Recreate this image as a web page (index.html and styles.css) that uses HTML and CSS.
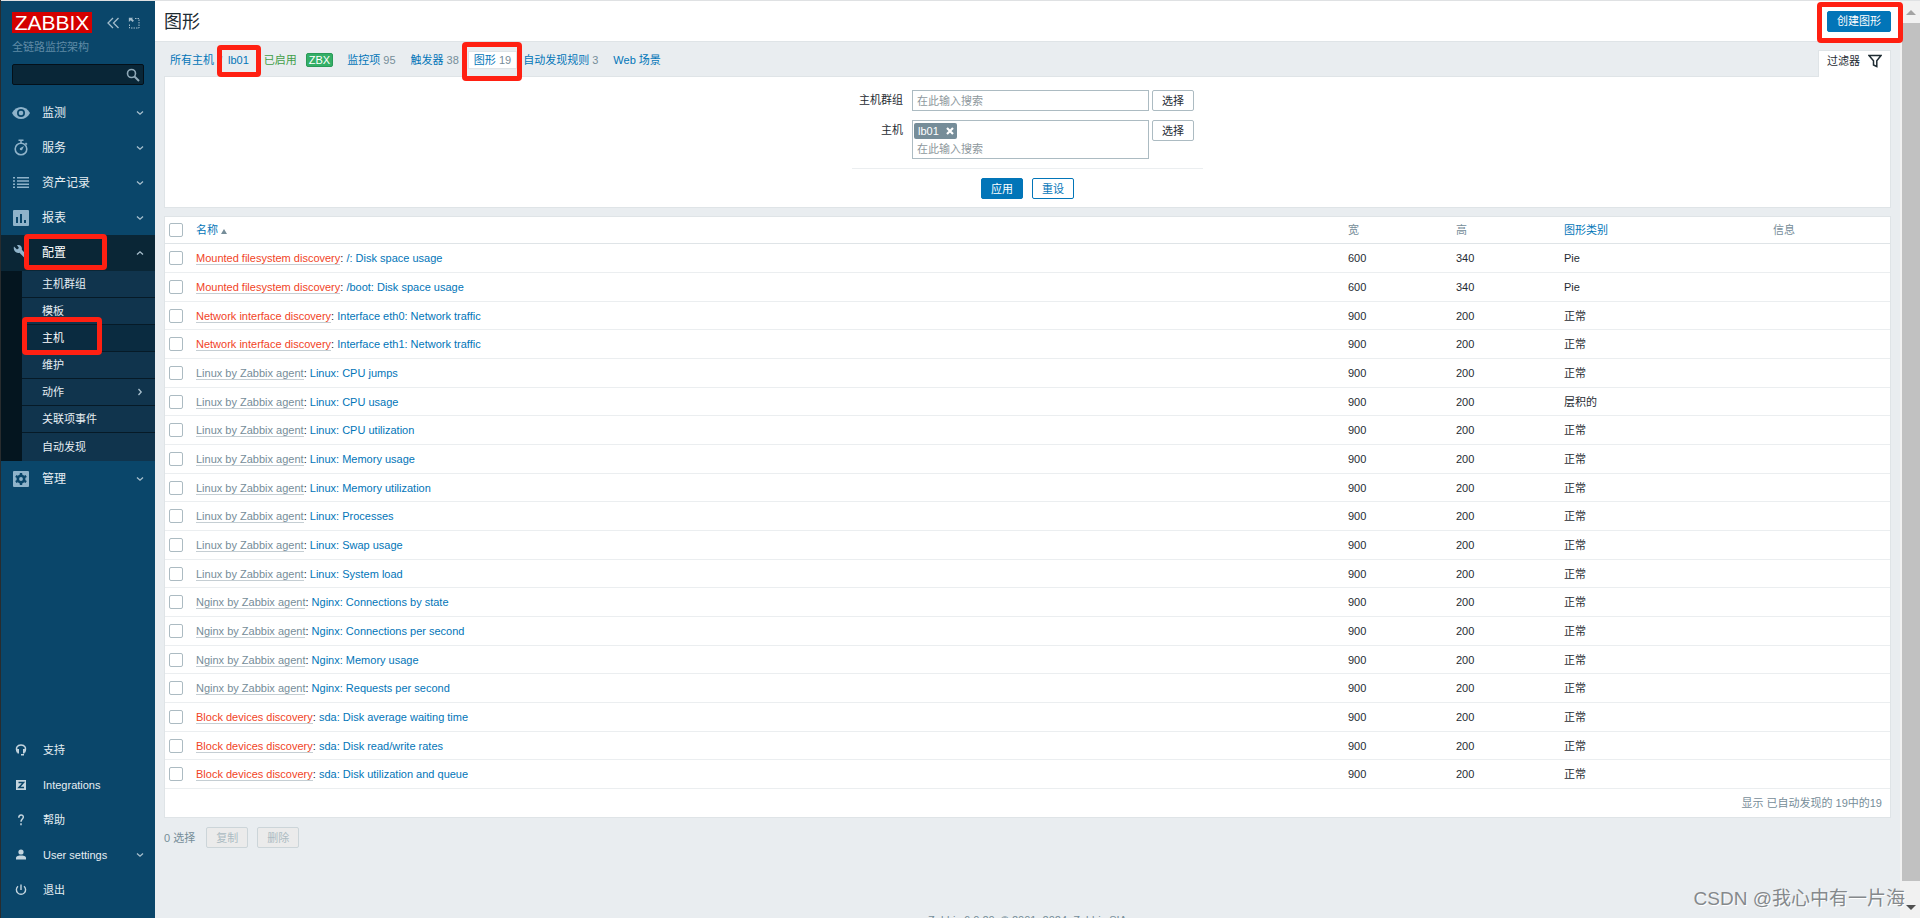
FILE: index.html
```html
<!DOCTYPE html>
<html lang="zh-CN">
<head>
<meta charset="utf-8">
<title>图形</title>
<link rel="stylesheet" href="styles.css">
</head>
<body>
<svg class="defs" aria-hidden="true">
  <symbol id="down" viewBox="0 0 8 8"><path d="M1 2.500L4 5.200L7 2.500" fill="none" stroke="currentColor" stroke-width="1.300"/></symbol>
</svg>
<div class="app">
  <aside class="sidebar">
    <div class="brand">
      <a class="logo" href="#">ZABBIX</a>
      <button class="icon-btn" aria-label="收起"><svg width="14" height="14" viewBox="0 0 14 14"><path d="M7 2L2 7l5 5M12.500 2l-5 5 5 5" fill="none" stroke="currentColor" stroke-width="1.300"/></svg></button>
      <button class="icon-btn" aria-label="隐藏"><svg width="12" height="12" viewBox="0 0 12 12"><path d="M7 1.500h4v9.500H1.500V7" fill="none" stroke="currentColor" stroke-width="1" stroke-dasharray="1.500 1"/><path d="M1 1h5L4.800 2.200 7 4.400 5.400 6 3.200 3.800 1 6z" transform="scale(.85)" fill="currentColor"/></svg></button>
    </div>
    <div class="server">全链路监控架构</div>
    <div class="search">
      <input type="text" aria-label="搜索">
      <svg width="14" height="14" viewBox="0 0 14 14"><circle cx="5.500" cy="5.500" r="4" fill="none" stroke="currentColor" stroke-width="1.600"/><path d="M8.500 8.500l4.500 4.500" stroke="currentColor" stroke-width="2"/></svg>
    </div>
    <nav class="menu">
      <a href="#" class="item"><svg class="ic" viewBox="0 0 18 18"><path d="M0 9C2 5 5.500 3 9 3s7 2 9 6c-2 4-5.500 6-9 6s-7-2-9-6z" fill="currentColor"/><circle cx="9" cy="9" r="4" fill="#0a466a"/><circle cx="9" cy="9" r="2.300" fill="currentColor"/></svg><span>监测</span><svg class="chev"><use href="#down"/></svg></a>
      <a href="#" class="item"><svg class="ic" viewBox="0 0 18 18"><circle cx="9" cy="10" r="5.800" fill="none" stroke="currentColor" stroke-width="1.600"/><path d="M6.500 1.300h5M9 1v3M13.500 4l1.500 1.500" stroke="currentColor" stroke-width="1.500"/><path d="M12 7l-2 4.200L8 11 7.800 9.200z" fill="currentColor"/></svg><span>服务</span><svg class="chev"><use href="#down"/></svg></a>
      <a href="#" class="item"><svg class="ic" viewBox="0 0 18 18"><path d="M1 4.800h2M1 8h2M1 11.200h2M1 14.200h2M5 4.800h12M5 8h12M5 11.200h12M5 14.200h12" transform="translate(0 -1)" stroke="currentColor" stroke-width="1.400"/></svg><span>资产记录</span><svg class="chev"><use href="#down"/></svg></a>
      <a href="#" class="item"><svg class="ic" viewBox="0 0 18 18"><rect x="1" y="1" width="16" height="16" rx="1" fill="currentColor"/><path d="M5 8v6M9 5v9M13 11v3" stroke="#0a466a" stroke-width="2"/></svg><span>报表</span><svg class="chev"><use href="#down"/></svg></a>
      <a href="#" class="item open"><svg class="ic" viewBox="0 0 18 18"><path d="M2 2.500L5 5.500 7 4 5 1.200C8 .2 10.500 2.500 9.800 5.800L17 13.500 14.500 16 7.500 8.700C4 9.800.8 6.500 2 2.500z" fill="currentColor"/></svg><span>配置</span><svg class="chev up"><use href="#down"/></svg></a>
      <div class="sub">
        <a href="#">主机群组</a>
        <a href="#">模板</a>
        <a href="#" class="current">主机</a>
        <a href="#">维护</a>
        <a href="#">动作<svg class="chev right"><use href="#down"/></svg></a>
        <a href="#">关联项事件</a>
        <a href="#">自动发现</a>
      </div>
      <a href="#" class="item"><svg class="ic" viewBox="0 0 18 18"><rect x="1" y="1" width="16" height="16" rx="1" fill="currentColor"/><circle cx="9" cy="9" r="3.200" fill="none" stroke="#0a466a" stroke-width="2.600"/><path d="M9 3v2M9 13v2M3.800 6l1.700 1M12.500 11l1.700 1M3.800 12l1.700-1M12.500 7l1.700-1" stroke="#0a466a" stroke-width="2.400"/></svg><span>管理</span><svg class="chev"><use href="#down"/></svg></a>
    </nav>
    <nav class="menu user">
      <a href="#" class="item"><svg class="ic" viewBox="0 0 18 18"><path d="M5.500 11.500C3 6.500 5.500 4 9 4s6 2.500 3.500 7.500" fill="none" stroke="currentColor" stroke-width="1.400"/><path d="M5 8h2v4.500H5.500zM11 8h2l-.5 4.500H11zM9 13h3v1.500H9z" fill="currentColor"/></svg><span>支持</span></a>
      <a href="#" class="item"><svg class="ic" viewBox="0 0 18 18"><rect x="4" y="4" width="10" height="10" fill="currentColor"/><path d="M6.500 6.500h5L7 11.500h5" fill="none" stroke="#0a466a" stroke-width="1.500"/></svg><span>Integrations</span></a>
      <a href="#" class="item"><svg class="ic" viewBox="0 0 18 18"><path d="M6.800 6.800C6.800 3 11.500 3.200 11.300 6.300 11.200 8 9 8.300 9 10.800M9 12.300v1.900" fill="none" stroke="currentColor" stroke-width="1.500"/></svg><span>帮助</span></a>
      <a href="#" class="item"><svg class="ic" viewBox="0 0 18 18"><circle cx="9" cy="6" r="2.600" fill="currentColor"/><path d="M4 13.500v-1.500c0-2 3-2.500 5-2.500s5 .5 5 2.500v1.500z" fill="currentColor"/></svg><span>User settings</span><svg class="chev"><use href="#down"/></svg></a>
      <a href="#" class="item"><svg class="ic" viewBox="0 0 18 18"><path d="M6 5.200a4.600 4.600 0 1 0 6 0M9 3.500V9" fill="none" stroke="currentColor" stroke-width="1.400"/></svg><span>退出</span></a>
    </nav>
  </aside>

  <main class="main">
    <header class="header">
      <h1>图形</h1>
      <button class="btn primary">创建图形</button>
    </header>
    <div class="content">
      <div class="tabs">
        <a href="#">所有主机</a><i class="slash">/</i><a href="#" class="host">lb01</a><span class="ok">已启用</span><span class="zbx">ZBX</span>
        <a href="#" class="tab">监控项 <sup>95</sup></a>
        <a href="#" class="tab">触发器 <sup>38</sup></a>
        <a href="#" class="tab sel">图形 <sup>19</sup></a>
        <a href="#" class="tab">自动发现规则 <sup>3</sup></a>
        <a href="#" class="tab">Web 场景</a>
        <button class="filter-tab">过滤器<svg width="14" height="14" viewBox="0 0 14 14"><path d="M1 1.500h12L8.800 6.800v5.700L5.500 11V6.800z" fill="none" stroke="#1f2c33" stroke-width="1.500"/></svg></button>
      </div>
      <section class="panel filter">
        <form class="form">
          <div class="fields">
            <label for="groups">主机群组</label>
            <div class="multi"><input id="groups" type="text" placeholder="在此输入搜索"></div>
            <button type="button" class="btn grey">选择</button>
            <label for="hosts">主机</label>
            <div class="multi two"><span class="chip">lb01<svg width="8" height="8" viewBox="0 0 8 8"><path d="M1 1l6 6M7 1L1 7" stroke="#fff" stroke-width="2.200"/></svg></span><input id="hosts" type="text" placeholder="在此输入搜索"></div>
            <button type="button" class="btn grey">选择</button>
          </div>
          <div class="actions"><button type="button" class="btn primary">应用</button><button type="button" class="btn">重设</button></div>
        </form>
      </section>
      <section class="panel list">
        <table>
          <colgroup><col class="c-check"><col><col class="c-num"><col class="c-num"><col class="c-type"><col class="c-info"></colgroup>
          <thead><tr><th><input type="checkbox" aria-label="全选"></th><th><a href="#">名称</a> <b class="sort"></b></th><th>宽</th><th>高</th><th><a href="#">图形类别</a></th><th>信息</th></tr></thead>
          <tbody>
          <tr><td><input type="checkbox" aria-label="选择"></td><td><a class="red" href="#">Mounted filesystem discovery</a>: <a href="#">/: Disk space usage</a></td><td>600</td><td>340</td><td>Pie</td><td></td></tr>
          <tr><td><input type="checkbox" aria-label="选择"></td><td><a class="red" href="#">Mounted filesystem discovery</a>: <a href="#">/boot: Disk space usage</a></td><td>600</td><td>340</td><td>Pie</td><td></td></tr>
          <tr><td><input type="checkbox" aria-label="选择"></td><td><a class="red" href="#">Network interface discovery</a>: <a href="#">Interface eth0: Network traffic</a></td><td>900</td><td>200</td><td>正常</td><td></td></tr>
          <tr><td><input type="checkbox" aria-label="选择"></td><td><a class="red" href="#">Network interface discovery</a>: <a href="#">Interface eth1: Network traffic</a></td><td>900</td><td>200</td><td>正常</td><td></td></tr>
          <tr><td><input type="checkbox" aria-label="选择"></td><td><a class="tpl" href="#">Linux by Zabbix agent</a>: <a href="#">Linux: CPU jumps</a></td><td>900</td><td>200</td><td>正常</td><td></td></tr>
          <tr><td><input type="checkbox" aria-label="选择"></td><td><a class="tpl" href="#">Linux by Zabbix agent</a>: <a href="#">Linux: CPU usage</a></td><td>900</td><td>200</td><td>层积的</td><td></td></tr>
          <tr><td><input type="checkbox" aria-label="选择"></td><td><a class="tpl" href="#">Linux by Zabbix agent</a>: <a href="#">Linux: CPU utilization</a></td><td>900</td><td>200</td><td>正常</td><td></td></tr>
          <tr><td><input type="checkbox" aria-label="选择"></td><td><a class="tpl" href="#">Linux by Zabbix agent</a>: <a href="#">Linux: Memory usage</a></td><td>900</td><td>200</td><td>正常</td><td></td></tr>
          <tr><td><input type="checkbox" aria-label="选择"></td><td><a class="tpl" href="#">Linux by Zabbix agent</a>: <a href="#">Linux: Memory utilization</a></td><td>900</td><td>200</td><td>正常</td><td></td></tr>
          <tr><td><input type="checkbox" aria-label="选择"></td><td><a class="tpl" href="#">Linux by Zabbix agent</a>: <a href="#">Linux: Processes</a></td><td>900</td><td>200</td><td>正常</td><td></td></tr>
          <tr><td><input type="checkbox" aria-label="选择"></td><td><a class="tpl" href="#">Linux by Zabbix agent</a>: <a href="#">Linux: Swap usage</a></td><td>900</td><td>200</td><td>正常</td><td></td></tr>
          <tr><td><input type="checkbox" aria-label="选择"></td><td><a class="tpl" href="#">Linux by Zabbix agent</a>: <a href="#">Linux: System load</a></td><td>900</td><td>200</td><td>正常</td><td></td></tr>
          <tr><td><input type="checkbox" aria-label="选择"></td><td><a class="tpl" href="#">Nginx by Zabbix agent</a>: <a href="#">Nginx: Connections by state</a></td><td>900</td><td>200</td><td>正常</td><td></td></tr>
          <tr><td><input type="checkbox" aria-label="选择"></td><td><a class="tpl" href="#">Nginx by Zabbix agent</a>: <a href="#">Nginx: Connections per second</a></td><td>900</td><td>200</td><td>正常</td><td></td></tr>
          <tr><td><input type="checkbox" aria-label="选择"></td><td><a class="tpl" href="#">Nginx by Zabbix agent</a>: <a href="#">Nginx: Memory usage</a></td><td>900</td><td>200</td><td>正常</td><td></td></tr>
          <tr><td><input type="checkbox" aria-label="选择"></td><td><a class="tpl" href="#">Nginx by Zabbix agent</a>: <a href="#">Nginx: Requests per second</a></td><td>900</td><td>200</td><td>正常</td><td></td></tr>
          <tr><td><input type="checkbox" aria-label="选择"></td><td><a class="red" href="#">Block devices discovery</a>: <a href="#">sda: Disk average waiting time</a></td><td>900</td><td>200</td><td>正常</td><td></td></tr>
          <tr><td><input type="checkbox" aria-label="选择"></td><td><a class="red" href="#">Block devices discovery</a>: <a href="#">sda: Disk read/write rates</a></td><td>900</td><td>200</td><td>正常</td><td></td></tr>
          <tr><td><input type="checkbox" aria-label="选择"></td><td><a class="red" href="#">Block devices discovery</a>: <a href="#">sda: Disk utilization and queue</a></td><td>900</td><td>200</td><td>正常</td><td></td></tr>
          </tbody>
        </table>
        <div class="total">显示 已自动发现的 19中的19</div>
      </section>
      <div class="bulk"><span>0 选择</span><button class="btn off" disabled>复制</button><button class="btn off" disabled>删除</button></div>
      <footer class="copyright">Zabbix 6.0.20. © 2001–2024, Zabbix SIA</footer>
    </div>
  </main>
  <div class="scroll" aria-hidden="true"><i class="arrow-up"></i><i class="thumb"></i><i class="arrow-down"></i></div>
</div>
<div class="mark m-host"></div><div class="mark m-graph"></div><div class="mark m-create"></div><div class="mark m-config"></div><div class="mark m-hosts"></div>
<div class="watermark">CSDN @我心中有一片海</div>
</body>
</html>
```
FILE: styles.css
```css
* { box-sizing: border-box; }
body { margin: 0; height: 100vh; overflow: hidden; position: relative; background: #e9edf0; color: #1f2c33; font: 11px/14px "Liberation Sans", "Noto Sans CJK SC", sans-serif; }
button, input { font: inherit; color: inherit; }
button { cursor: pointer; }
a { color: #0275b8; text-decoration: none; }
svg { display: block; flex: none; }
.defs { position: absolute; width: 0; height: 0; }
.app { display: flex; height: 100%; overflow: hidden; border-left: 1px solid #292c2e; }

.sidebar { width: 154px; flex: none; display: flex; flex-direction: column; background: #0a466a; border-top: 1px solid #dfe1e3; }
.brand { display: flex; align-items: center; padding: 11px 0 0 11px; }
.logo { background: #d40000; color: #fff; font-size: 21px; line-height: 21px; width: 80px; text-align: center; margin-right: 10px; }
.icon-btn { border: 0; background: none; padding: 0; color: #a3bccb; margin: 0 4px; }
.server { color: #5f8aa5; padding: 6px 11px 0; line-height: 16px; }
.search { display: flex; align-items: center; margin: 9px 11px 10px; height: 21px; background: #092637; border: 1px solid #041019; border-radius: 2px; color: #8fa9b8; padding-right: 3px; }
.search input { flex: 1; min-width: 0; border: 0; background: none; outline: 0; padding: 0 4px; }
.menu .item { display: flex; align-items: center; height: 35px; padding: 0 11px; color: #e6eef3; font-size: 12px; }
.item .ic { width: 18px; height: 18px; margin-right: 12px; color: #8fb3ca; }
.item span { flex: 1; }
.menu .open { height: 36px; background: #0a2636; color: #fff; }
.chev { width: 8px; height: 8px; color: #a9c0ce; }
.chev.up { transform: rotate(180deg); }
.chev.right { transform: rotate(-90deg); }
.sub { border-left: 21px solid #04151f; padding-bottom: 1px; background: #10344d; }
.sub a { display: flex; align-items: center; justify-content: space-between; height: 27px; padding: 0 11px 0 20px; border-bottom: 1px solid #061a27; color: #e6eef3; }
.sub a:last-child { border-bottom: 0; }
.sub .current { background: #0a2b40; color: #fff; }
.menu.user { margin-top: auto; padding-bottom: 11px; }
.user .item { font-size: 11px; }
.user .ic { color: #c4d5df; margin-right: 13px; }

.main { flex: 1; min-width: 0; border-top: 1px solid #dfe1e3; }
.header { display: flex; align-items: center; justify-content: space-between; height: 41px; padding: 0 9px 9px; background: #fff; border-bottom: 1px solid #dfe4e7; }
.header h1 { margin: 0; font-size: 18px; font-weight: 400; line-height: 24px; padding-top: 10px; }
.btn { height: 21px; border: 1px solid #0275b8; border-radius: 2px; background: #fff; color: #0275b8; padding: 0 9px; line-height: 14px; white-space: nowrap; }
.btn.primary { background: #0275b8; color: #fff; }
.btn.grey { border-color: #acbbc2; color: #1f2c33; }
.btn.off { border-color: #ccd5d9; background: #ebebeb; color: #acbbc2; }
.header .btn { margin-top: 9px; }
.content { padding: 8px 9px 0 9px; }
.tabs { display: flex; align-items: center; height: 26px; padding: 0 0 6px 6px; white-space: nowrap; }
.slash { width: 14px; text-align: center; color: #acbbc2; font-style: normal; }
.ok { color: #429e47; margin-left: 15px; }
.zbx { background: #34af67; border: 1px solid #2a9a58; border-radius: 2px; color: #fff; line-height: 12px; padding: 0 2px; margin: 0 8px 0 9px; }
.tab { padding: 1px 5px; margin-right: 3px; border: 1px solid transparent; }
.tab sup { font-size: 11px; line-height: 14px; vertical-align: baseline; color: #768d99; }
.tab.sel { background: #fff; border-color: #dfe4e7; margin-right: 0; }
.filter-tab { display: flex; align-items: center; gap: 8px; align-self: flex-start; margin-left: auto; height: 27px; padding: 0 8px 6px; background: #fff; border: 1px solid #dfe4e7; border-bottom: 0; position: relative; z-index: 1; }
.panel { background: #fff; border: 1px solid #dfe4e7; }
.filter { padding: 13px 0 8px; }
.form { width: 351px; margin: 0 auto; }
.fields { display: grid; grid-template-columns: 51px 3px 237px 42px; column-gap: 3px; row-gap: 9px; align-items: start; padding-bottom: 9px; border-bottom: 1px solid #ebeef0; }
.fields label { grid-column: 1; text-align: right; line-height: 20px; }
.fields .multi { grid-column: 3; border: 1px solid #acbbc2; min-height: 21px; padding: 0 4px; }
.multi input { display: block; width: 100%; height: 19px; border: 0; outline: 0; padding: 0; background: none; }
.multi input::placeholder { color: #8e989d; opacity: 1; }
.fields .two { padding: 2px 4px 0 1px; min-height: 39px; }
.two input { padding-left: 3px; }
.chip { display: inline-flex; align-items: center; gap: 7px; height: 16px; background: #768d99; color: #fff; border-radius: 2px; padding: 0 3px 0 4px; vertical-align: top; }
.actions { display: flex; justify-content: center; gap: 9px; padding-top: 9px; }
.actions .btn { width: 42px; }
.list { margin-top: 8px; }
table { width: 100%; table-layout: fixed; border-collapse: separate; border-spacing: 0; }
.c-check { width: 25px; }
.c-num { width: 108px; }
.c-type { width: 209px; }
.c-info { width: 123px; }
th, td { padding: 0 6px; text-align: left; font-weight: 400; height: 29px; border-bottom: 1px solid #ebeef0; vertical-align: middle; }
th { height: 27px; color: #768d99; border-color: #dfe4e7; }
tbody tr:nth-child(3n) td { height: 28px; }
th:first-child, td:first-child { padding: 0 0 0 4px; }
input[type=checkbox] { appearance: none; display: block; width: 14px; height: 14px; margin: 0; border: 1px solid #acbbc2; border-radius: 2px; background: #fff; }
.sort { display: inline-block; border: 3px solid transparent; border-top: 0; border-bottom: 5px solid #768d99; }
td a.red, td a.tpl { border-bottom: 1px solid #c5ced3; }
td a.red { color: #f1441f; }
td a.tpl { color: #768d99; }
.total { text-align: right; color: #768d99; padding: 7px 8px; }
.bulk { display: flex; align-items: center; margin-top: 9px; color: #768d99; }
.bulk span { margin-right: 11px; }
.bulk .btn { width: 42px; margin-right: 9px; }
.copyright { text-align: center; color: #768d99; padding-top: 65px; }

.scroll { width: 20px; flex: none; display: flex; flex-direction: column; align-items: center; background: #f1f1f1; border-top: 1px solid #dfe1e3; padding-left: 2px; }
.thumb { flex: 1; width: 100%; background: #c1c1c1; }
.arrow-up { margin: 9px 0 8px; border: 5px solid transparent; border-top: 0; border-bottom-color: #a3a3a3; }
.arrow-down { margin: 24px 0 8px; border: 5px solid transparent; border-bottom: 0; border-top-color: #505050; }

.mark { position: absolute; border: 5px solid #ff2012; border-radius: 4px; pointer-events: none; }
.m-host { left: 217px; top: 45px; width: 44px; height: 32px; }
.m-graph { left: 462px; top: 42px; width: 60px; height: 39px; }
.m-create { right: 17px; top: 2px; width: 86px; height: 41px; }
.m-config { left: 24px; top: 234px; width: 83px; height: 36px; }
.m-hosts { left: 22px; top: 317px; width: 80px; height: 38px; }
.watermark { position: absolute; right: 15px; bottom: 6px; font-size: 19px; line-height: 26px; color: #85898c; text-shadow: 1px 1px 0 #fff; white-space: nowrap; }
```
